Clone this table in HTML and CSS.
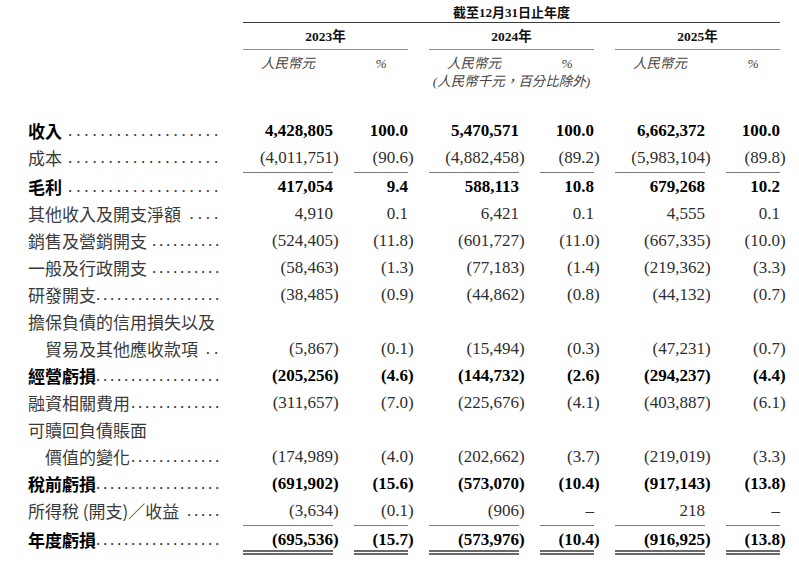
FILE: index.html
```html
<!DOCTYPE html>
<html lang="zh-Hant">
<head>
<meta charset="utf-8">
<title>截至12月31日止年度</title>
<link rel="stylesheet" href="styles.css">
</head>
<body>
<div class="sheet">
  <div class="grid head1">
    <div class="title">截至12月31日止年度</div>
  </div>
  <div class="grid head2">
    <div class="year y1">2023年</div>
    <div class="year y2">2024年</div>
    <div class="year y3">2025年</div>
  </div>
  <div class="grid head3">
    <div class="unit c2">人民幣元</div>
    <div class="unit pct c3">%</div>
    <div class="unit c4">人民幣元</div>
    <div class="unit pct c5">%</div>
    <div class="unit c6">人民幣元</div>
    <div class="unit pct c7">%</div>
  </div>
  <div class="grid head4">
    <div class="unit sub">(人民幣千元，百分比除外)</div>
  </div>

  <div class="body">
    <div class="grid row b">
      <div class="lab"><span class="t">收入</span><span class="lead sp">...................</span></div>
      <div class="n">4,428,805</div><div class="n">100.0</div>
      <div class="n">5,470,571</div><div class="n">100.0</div>
      <div class="n">6,662,372</div><div class="n">100.0</div>
    </div>
    <div class="grid row ul">
      <div class="lab"><span class="t">成本</span><span class="lead sp">...................</span></div>
      <div class="n">(4,011,751<span class="p">)</span></div><div class="n">(90.6<span class="p">)</span></div>
      <div class="n">(4,882,458<span class="p">)</span></div><div class="n">(89.2<span class="p">)</span></div>
      <div class="n">(5,983,104<span class="p">)</span></div><div class="n">(89.8<span class="p">)</span></div>
    </div>
    <div class="grid row b">
      <div class="lab"><span class="t">毛利</span><span class="lead sp">...................</span></div>
      <div class="n">417,054</div><div class="n">9.4</div>
      <div class="n">588,113</div><div class="n">10.8</div>
      <div class="n">679,268</div><div class="n">10.2</div>
    </div>
    <div class="grid row">
      <div class="lab"><span class="t">其他收入及開支淨額</span><span class="lead sp">....</span></div>
      <div class="n">4,910</div><div class="n">0.1</div>
      <div class="n">6,421</div><div class="n">0.1</div>
      <div class="n">4,555</div><div class="n">0.1</div>
    </div>
    <div class="grid row">
      <div class="lab"><span class="t">銷售及營銷開支</span><span class="lead">..........</span></div>
      <div class="n">(524,405<span class="p">)</span></div><div class="n">(11.8<span class="p">)</span></div>
      <div class="n">(601,727<span class="p">)</span></div><div class="n">(11.0<span class="p">)</span></div>
      <div class="n">(667,335<span class="p">)</span></div><div class="n">(10.0<span class="p">)</span></div>
    </div>
    <div class="grid row">
      <div class="lab"><span class="t">一般及行政開支</span><span class="lead">..........</span></div>
      <div class="n">(58,463<span class="p">)</span></div><div class="n">(1.3<span class="p">)</span></div>
      <div class="n">(77,183<span class="p">)</span></div><div class="n">(1.4<span class="p">)</span></div>
      <div class="n">(219,362<span class="p">)</span></div><div class="n">(3.3<span class="p">)</span></div>
    </div>
    <div class="grid row">
      <div class="lab"><span class="t">研發開支</span><span class="lead">..................</span></div>
      <div class="n">(38,485<span class="p">)</span></div><div class="n">(0.9<span class="p">)</span></div>
      <div class="n">(44,862<span class="p">)</span></div><div class="n">(0.8<span class="p">)</span></div>
      <div class="n">(44,132<span class="p">)</span></div><div class="n">(0.7<span class="p">)</span></div>
    </div>
    <div class="grid row">
      <div class="lab"><span class="t">擔保負債的信用損失以及</span></div>
    </div>
    <div class="grid row">
      <div class="lab"><span class="t ind">貿易及其他應收款項</span><span class="lead sp">..</span></div>
      <div class="n">(5,867<span class="p">)</span></div><div class="n">(0.1<span class="p">)</span></div>
      <div class="n">(15,494<span class="p">)</span></div><div class="n">(0.3<span class="p">)</span></div>
      <div class="n">(47,231<span class="p">)</span></div><div class="n">(0.7<span class="p">)</span></div>
    </div>
    <div class="grid row b">
      <div class="lab"><span class="t">經營虧損</span><span class="lead">..................</span></div>
      <div class="n">(205,256<span class="p">)</span></div><div class="n">(4.6<span class="p">)</span></div>
      <div class="n">(144,732<span class="p">)</span></div><div class="n">(2.6<span class="p">)</span></div>
      <div class="n">(294,237<span class="p">)</span></div><div class="n">(4.4<span class="p">)</span></div>
    </div>
    <div class="grid row">
      <div class="lab"><span class="t">融資相關費用</span><span class="lead">.............</span></div>
      <div class="n">(311,657<span class="p">)</span></div><div class="n">(7.0<span class="p">)</span></div>
      <div class="n">(225,676<span class="p">)</span></div><div class="n">(4.1<span class="p">)</span></div>
      <div class="n">(403,887<span class="p">)</span></div><div class="n">(6.1<span class="p">)</span></div>
    </div>
    <div class="grid row">
      <div class="lab"><span class="t">可贖回負債賬面</span></div>
    </div>
    <div class="grid row">
      <div class="lab"><span class="t ind">價值的變化</span><span class="lead">.............</span></div>
      <div class="n">(174,989<span class="p">)</span></div><div class="n">(4.0<span class="p">)</span></div>
      <div class="n">(202,662<span class="p">)</span></div><div class="n">(3.7<span class="p">)</span></div>
      <div class="n">(219,019<span class="p">)</span></div><div class="n">(3.3<span class="p">)</span></div>
    </div>
    <div class="grid row b">
      <div class="lab"><span class="t">稅前虧損</span><span class="lead">..................</span></div>
      <div class="n">(691,902<span class="p">)</span></div><div class="n">(15.6<span class="p">)</span></div>
      <div class="n">(573,070<span class="p">)</span></div><div class="n">(10.4<span class="p">)</span></div>
      <div class="n">(917,143<span class="p">)</span></div><div class="n">(13.8<span class="p">)</span></div>
    </div>
    <div class="grid row ul">
      <div class="lab"><span class="t">所得稅 (開支)／收益</span><span class="lead">.....</span></div>
      <div class="n">(3,634<span class="p">)</span></div><div class="n">(0.1<span class="p">)</span></div>
      <div class="n">(906<span class="p">)</span></div><div class="n">–</div>
      <div class="n">218</div><div class="n">–</div>
    </div>
    <div class="grid row b dbl">
      <div class="lab"><span class="t">年度虧損</span><span class="lead">..................</span></div>
      <div class="n">(695,536<span class="p">)</span></div><div class="n">(15.7<span class="p">)</span></div>
      <div class="n">(573,976<span class="p">)</span></div><div class="n">(10.4<span class="p">)</span></div>
      <div class="n">(916,925<span class="p">)</span></div><div class="n">(13.8<span class="p">)</span></div>
    </div>
  </div>
</div>
</body>
</html>
```

FILE: styles.css
```css
* { box-sizing: border-box; margin: 0; padding: 0; }
html, body { background: #fff; }
body {
  margin: 0;
  color: #333;
  font-family: "Liberation Serif", "Noto Sans CJK TC", serif;
}
.sheet {
  width: 799px;
  padding-left: 28px;
}
.grid {
  display: grid;
  grid-template-columns: 194px 90px 54px 90px 54px 90px 54px;
  column-gap: 21px;
}
.title {
  grid-column: 2 / 8;
  text-align: center;
  font-weight: bold;
  font-size: 13px;
  line-height: 18px;
  padding-top: 4px;
  border-bottom: 1px solid #3a3a3a;
  color: #111;
}
.year {
  text-align: center;
  font-weight: bold;
  font-size: 13.5px;
  line-height: 25px;
  padding-top: 1px;
  border-bottom: 1px solid #8c8c8c;
  color: #111;
}
.y1 { grid-column: 2 / 4; }
.y2 { grid-column: 4 / 6; }
.y3 { grid-column: 6 / 8; }
.unit {
  font-style: italic;
  font-size: 13.5px;
  line-height: 18px;
  text-align: center;
  color: #444;
}
.head3 .unit { padding-top: 5px; }
.c2 { grid-column: 2; }
.c3 { grid-column: 3; }
.c4 { grid-column: 4; }
.c5 { grid-column: 5; }
.c6 { grid-column: 6; }
.c7 { grid-column: 7; }
.pct { font-family: "Liberation Serif", serif; }
.sub {
  grid-column: 4 / 6;
  font-size: 13.5px;
  white-space: nowrap;
}

.body { margin-top: 26px; }
.row {
  height: 27px;
  line-height: 27px;
  font-size: 17px;
}
.row.ul { height: 29px; }
.row.dbl { height: 29px; }
.lab {
  display: flex;
  white-space: nowrap;
  font-family: "Noto Sans CJK TC", sans-serif;
  color: #3a3a3a;
}
.t { flex: none; }
.ind { padding-left: 17px; }
.lead {
  flex: none;
  margin-left: auto;
  font-family: "Liberation Serif", serif;
  font-weight: normal;
  color: #333;
  letter-spacing: 2.75px;
}
.lead.sp {
  letter-spacing: 3.85px;
}
.n {
  text-align: right;
  white-space: nowrap;
  color: #2e2e2e;
}
.p { margin-right: -0.333em; }
.ul .n { border-bottom: 1px solid #7a7a7a; }
.dbl .n {
  line-height: 20px;
  padding-top: 4px;
  border-bottom: 5px double #6a6a6a;
}
.b .lab, .b .n {
  font-weight: bold;
  color: #000;
}
.b .lead {
  font-weight: normal;
  color: #333;
}
```
